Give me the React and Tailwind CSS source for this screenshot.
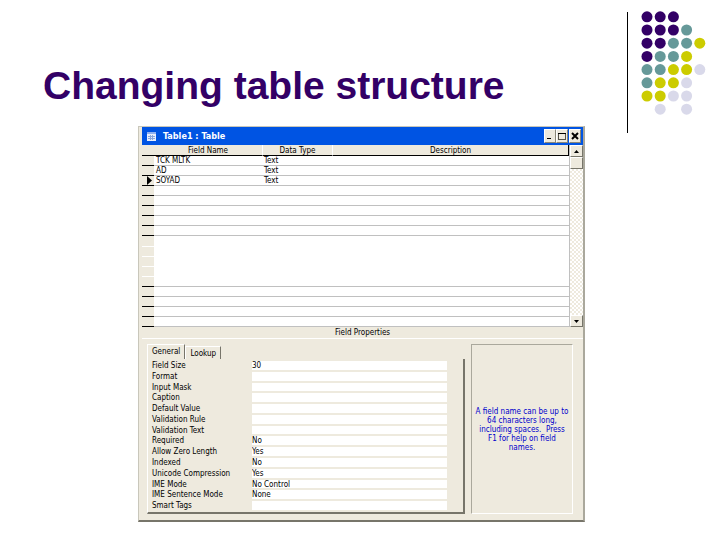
import React, { useState } from 'react';

const PURPLE = '#330066';
const TEAL = '#669999';
const LIME = '#cccc00';
const PALE = '#d9d9ea';

// One entry per row, null leaves a hole in the pattern
const dotRows = [
  [PURPLE, PURPLE, PURPLE],
  [PURPLE, PURPLE, PURPLE, TEAL],
  [PURPLE, PURPLE, TEAL, TEAL, LIME],
  [PURPLE, TEAL, TEAL, LIME],
  [TEAL, TEAL, LIME, LIME, PALE],
  [TEAL, LIME, LIME, PALE],
  [LIME, LIME, PALE, PALE],
  [null, PALE, null, PALE],
];

const fields = [
  { name: 'TCK MLTK', type: 'Text' },
  { name: 'AD', type: 'Text' },
  { name: 'SOYAD', type: 'Text', current: true },
];

const ROW_COUNT = 17;

const properties = [
  ['Field Size', '30'],
  ['Format', ''],
  ['Input Mask', ''],
  ['Caption', ''],
  ['Default Value', ''],
  ['Validation Rule', ''],
  ['Validation Text', ''],
  ['Required', 'No'],
  ['Allow Zero Length', 'Yes'],
  ['Indexed', 'No'],
  ['Unicode Compression', 'Yes'],
  ['IME Mode', 'No Control'],
  ['IME Sentence Mode', 'None'],
  ['Smart Tags', ''],
];

const SlideDots = () => (
  <svg width="93" height="135" viewBox="0 0 93 135" className="shrink-0" aria-hidden="true">
    <rect x="0" y="12" width="1" height="121" fill="#000" />
    {dotRows.map((row, r) =>
      row.map(
        (color, c) =>
          color && <circle key={`${r}-${c}`} cx={20 + c * 13.2} cy={16.8 + r * 13.2} r="5.5" fill={color} />
      )
    )}
  </svg>
);

const TitleButton = ({ label, children }) => (
  <button
    type="button"
    aria-label={label}
    className="w-3 h-[14px] bg-[#eeeade] border border-t-white border-l-white border-r-[#8a8778] border-b-[#8a8778]"
  >
    <svg width="10" height="12" viewBox="0 0 10 12" fill="none" stroke="#000" shapeRendering="crispEdges">
      {children}
    </svg>
  </button>
);

const TitleBar = () => (
  <div className="flex items-center h-[18px] pl-[5px] pr-[2px] bg-[#0054e3] text-white">
    <svg width="9" height="9" viewBox="0 0 9 9" shapeRendering="crispEdges" aria-hidden="true">
      <rect width="9" height="9" fill="#e8eefc" />
      <rect width="9" height="2" fill="#8fb0f0" />
      <path d="M1 4.5h7M1 6.5h7M3.5 3v5M5.5 3v5" stroke="#8aa6dc" />
    </svg>
    <h2 className="flex-1 ml-[7px] text-[9px] leading-[12px] font-bold">Table1 : Table</h2>
    <TitleButton label="Minimize">
      <path d="M2 8.5h4" />
    </TitleButton>
    <TitleButton label="Maximize">
      <path d="M1.5 3v7M8.5 3v7M1 9.5h8" stroke="#55534a" />
      <path d="M1 3.5h8" />
    </TitleButton>
    <span className="w-px" />
    <TitleButton label="Close">
      <path d="M2 3l6 6M8 3l-6 6" strokeWidth="2" shapeRendering="auto" />
    </TitleButton>
  </div>
);

const FieldGrid = () => (
  <table className="flex-1 table-fixed border-separate border-spacing-0 bg-white">
    <colgroup>
      <col className="w-3" />
      <col className="w-[109px]" />
      <col className="w-[70px]" />
      <col />
    </colgroup>
    <thead>
      <tr className="h-[11px] bg-[#eeeade] leading-[9px]">
        <th className="p-0 border-b border-black" aria-label="Row" />
        <th className="p-0 border-b border-black border-r border-r-white font-normal">Field Name</th>
        <th className="p-0 border-b border-black border-r border-r-white font-normal">Data Type</th>
        <th className="p-0 border-b border-r border-black font-normal">Description</th>
      </tr>
    </thead>
    <tbody>
      {Array.from({ length: ROW_COUNT }, (_, i) => {
        const field = fields[i] || {};
        const plain = i > 7 && i < 12;
        const line = plain ? 'p-0 border-b border-white' : 'p-0 border-b border-[#c0c0c0]';
        return (
          <tr key={i} className={`leading-[9px] ${i === 8 ? 'h-[11px]' : 'h-[10px]'}`}>
            <td className={`p-0 border-b bg-[#eeeade] ${plain ? 'border-white' : 'border-black'}`}>
              {field.current && (
                <svg width="12" height="9" viewBox="0 0 12 9" className="block" aria-label="Current row">
                  <path d="M5 0l5 4.5-5 4.5z" />
                </svg>
              )}
            </td>
            <td className={`${line} pl-[2px]`}>{field.name}</td>
            <td className={`${line} pl-[1px]`}>{field.type}</td>
            <td className={line} />
          </tr>
        );
      })}
    </tbody>
  </table>
);

const ScrollButton = ({ label, path }) => (
  <button
    type="button"
    aria-label={label}
    className="flex items-center justify-center h-3 bg-[#eeeade] border border-t-white border-l-white border-r-[#77756a] border-b-[#77756a]"
  >
    <svg width="5" height="3" viewBox="0 0 5 3">
      <path d={path} />
    </svg>
  </button>
);

const ScrollBar = () => (
  <div className="flex flex-col w-[14px] border-l border-[#c0c0c0] bg-[repeating-conic-gradient(#eeeade_0_25%,#ffffff_0_50%)] bg-[length:4px_4px]">
    <ScrollButton label="Scroll up" path="M0 3L2.5 0L5 3z" />
    <div className="h-3 bg-[#eeeade] border border-t-white border-l-white border-r-[#77756a] border-b-[#77756a]" />
    <div className="flex-1" />
    <ScrollButton label="Scroll down" path="M0 0L2.5 3L5 0z" />
  </div>
);

const FieldProperties = () => {
  const [tab, setTab] = useState('General');

  return (
    <div className="flex-1 flex flex-col">
      <div className="flex items-end" role="tablist">
        {['General', 'Lookup'].map((name) => (
          <button
            key={name}
            type="button"
            role="tab"
            aria-selected={tab === name}
            onClick={() => setTab(name)}
            className={`px-1 leading-[11px] border-t border-l border-r border-t-white border-l-white border-r-[#77756a] ${
              tab === name ? 'h-[15px] pb-[2px]' : 'h-[13px]'
            }`}
          >
            {name}
          </button>
        ))}
      </div>
      <div className="grid auto-rows-fr h-[155px] pl-1 pr-4 pt-[2px] border-l border-l-white border-r-2 border-b-2 border-r-[#77756a] border-b-[#77756a]">
        {properties.map(([label, value]) => {
          const id = label.toLowerCase().replaceAll(' ', '-');
          return (
            <div key={label} className="flex min-h-0">
              <label htmlFor={id} className="w-[100px] leading-[10px] whitespace-nowrap">
                {label}
              </label>
              <input
                id={id}
                defaultValue={value}
                className="flex-1 min-w-0 min-h-0 bg-white border-b-2 border-[#eeeade] leading-[9px] outline-none"
              />
            </div>
          );
        })}
      </div>
    </div>
  );
};

const AccessWindow = () => (
  <section className="border-l border-t border-[#c9c7bb] border-r-2 border-r-[#aaa89c] border-b-2 border-b-[#77756a] bg-[#eeeade] pl-[3px] font-['DejaVu_Sans_Condensed','DejaVu_Sans',sans-serif] text-[8px] text-black">
    <TitleBar />
    <div className="flex">
      <FieldGrid />
      <ScrollBar />
    </div>
    <h3 className="h-3 leading-[12px] text-center border-b border-white">Field Properties</h3>
    <div className="flex items-start gap-[6px] pt-[5px] pl-[5px] pr-[10px] pb-[6px]">
      <FieldProperties />
      <div className="w-[102px] self-stretch flex items-center justify-center border border-t-[#aaa89c] border-l-[#aaa89c] border-r-white border-b-white">
        <p className="text-center leading-[9px] text-[#0000cc] whitespace-pre-line">
          A field name can be up to{'\n'}64 characters long,{'\n'}including spaces.&nbsp; Press{'\n'}F1 for help on field
          {'\n'}names.
        </p>
      </div>
    </div>
  </section>
);

const App = () => {
  return (
    <main className="flex items-start min-h-screen bg-white">
      <div className="flex-1 pl-[43px] pr-[42px] pt-16">
        <h1 className="mb-[18px] text-[39px] leading-[44px] font-bold text-[#330066] whitespace-nowrap font-['Liberation_Sans',Arial,sans-serif]">
          Changing table structure
        </h1>
        <div className="pl-[95px]">
          <AccessWindow />
        </div>
      </div>
      <SlideDots />
    </main>
  );
};

export default App;
